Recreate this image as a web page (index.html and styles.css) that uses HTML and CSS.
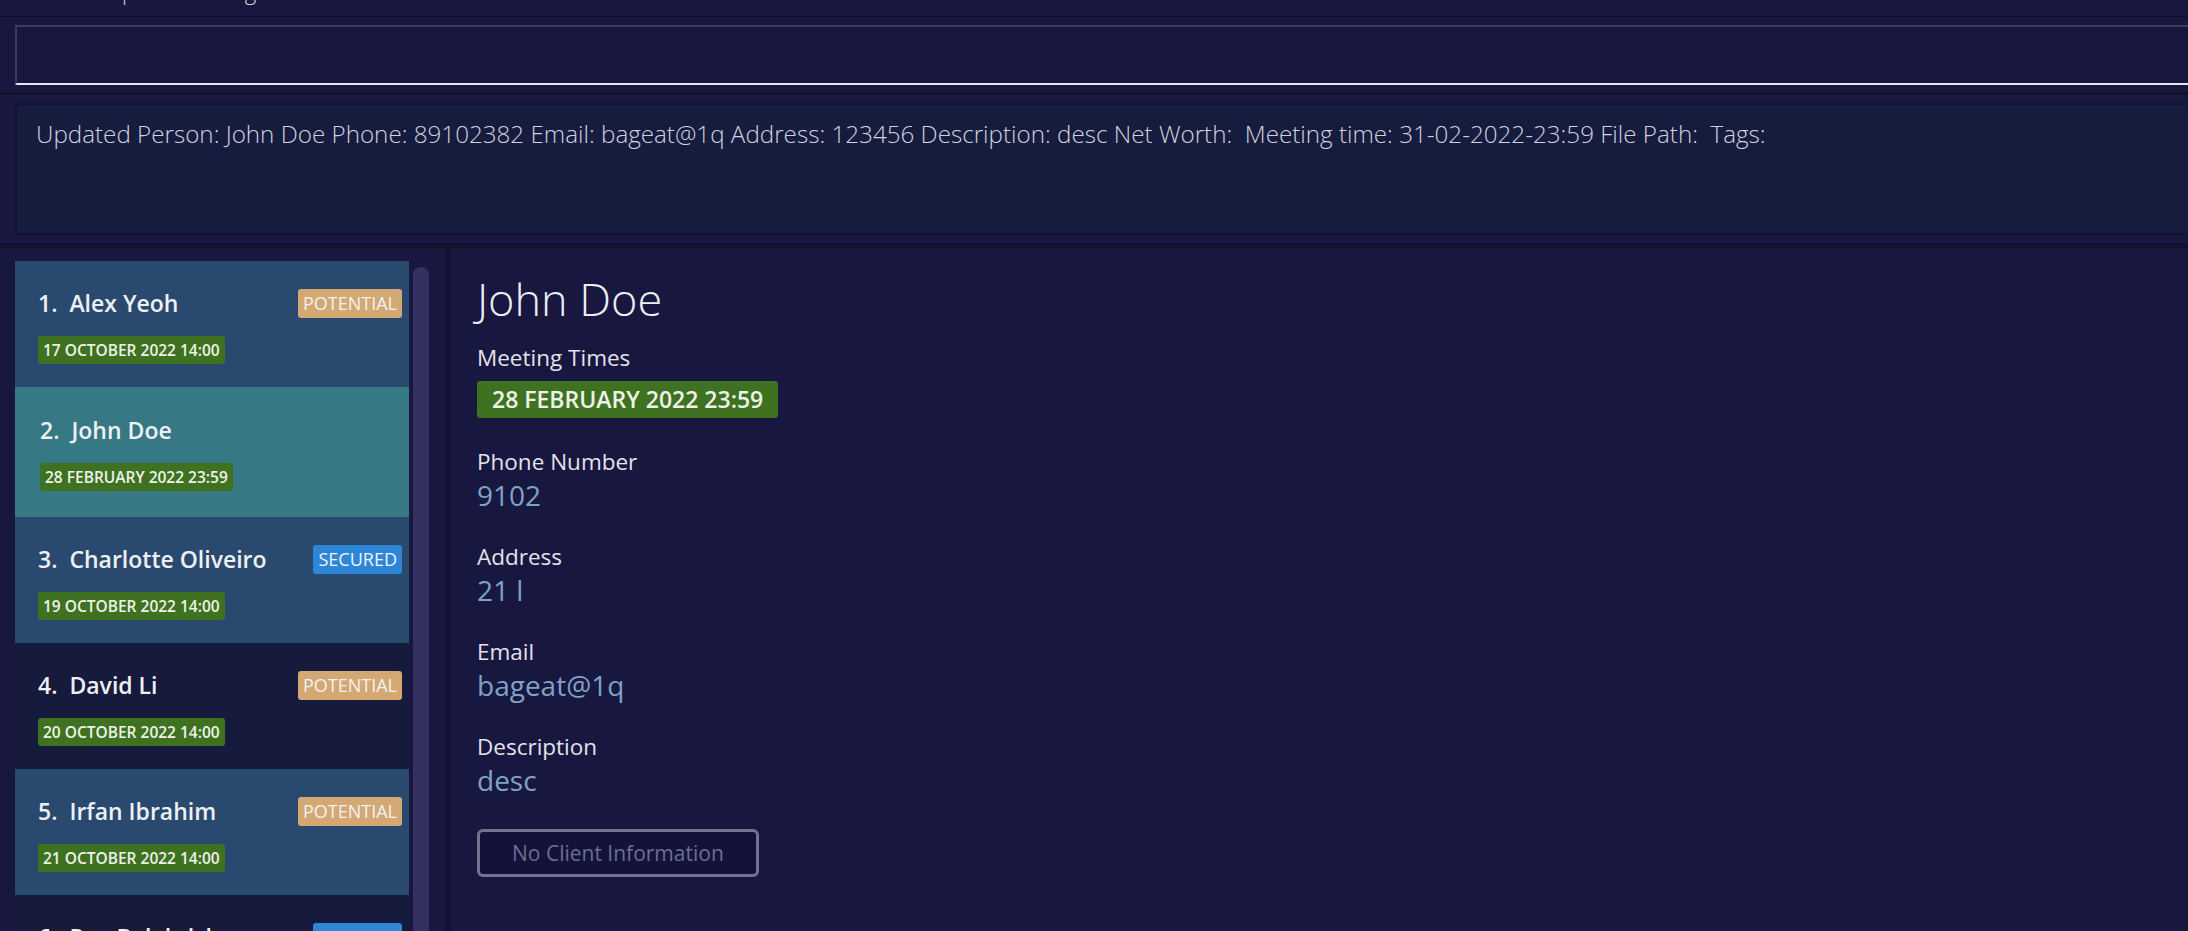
FILE: index.html
```html
<!DOCTYPE html>
<html>
<head>
<meta charset="utf-8">
<title>Client Manager</title>
<link rel="stylesheet" href="styles.css">
</head>
<body>
<div class="app">
  <div class="menubar">
    <span class="menu-item">File</span>
    <span class="menu-item">Help</span>
    <span class="menu-item">Settings</span>
  </div>

  <div class="command-wrap">
    <div class="command-box"></div>
  </div>

  <div class="result-wrap">
    <div class="result-box">Updated Person: John Doe Phone: 89102382 Email: bageat@1q Address: 123456 Description: desc Net Worth:  Meeting time: 31-02-2022-23:59 File Path:  Tags: </div>
  </div>

  <div class="main">
    <div class="list-panel">
      <div class="list">
        <div class="card card-odd">
          <div class="card-top">
            <span class="name">1.  Alex Yeoh</span>
            <span class="tag tag-potential">POTENTIAL</span>
          </div>
          <span class="date">17 OCTOBER 2022 14:00</span>
        </div>
        <div class="card card-selected">
          <div class="card-top">
            <span class="name">2.  John Doe</span>
          </div>
          <span class="date">28 FEBRUARY 2022 23:59</span>
        </div>
        <div class="card card-odd">
          <div class="card-top">
            <span class="name">3.  Charlotte Oliveiro</span>
            <span class="tag tag-secured">SECURED</span>
          </div>
          <span class="date">19 OCTOBER 2022 14:00</span>
        </div>
        <div class="card card-even">
          <div class="card-top">
            <span class="name">4.  David Li</span>
            <span class="tag tag-potential">POTENTIAL</span>
          </div>
          <span class="date">20 OCTOBER 2022 14:00</span>
        </div>
        <div class="card card-odd">
          <div class="card-top">
            <span class="name">5.  Irfan Ibrahim</span>
            <span class="tag tag-potential">POTENTIAL</span>
          </div>
          <span class="date">21 OCTOBER 2022 14:00</span>
        </div>
        <div class="card card-even">
          <div class="card-top">
            <span class="name">6.  Roy Balakrishnan</span>
            <span class="tag tag-secured">SECURED</span>
          </div>
          <span class="date">22 OCTOBER 2022 14:00</span>
        </div>
      </div>
      <div class="scrollbar"></div>
    </div>

    <div class="detail">
      <div class="detail-name">John Doe</div>
      <div class="field field-first">
        <div class="label">Meeting Times</div>
        <span class="meeting">28 FEBRUARY 2022 23:59</span>
      </div>
      <div class="field">
        <div class="label">Phone Number</div>
        <div class="value">9102</div>
      </div>
      <div class="field">
        <div class="label">Address</div>
        <div class="value">21 l</div>
      </div>
      <div class="field">
        <div class="label">Email</div>
        <div class="value">bageat@1q</div>
      </div>
      <div class="field">
        <div class="label">Description</div>
        <div class="value">desc</div>
      </div>
      <button class="client-btn">No Client Information</button>
    </div>
  </div>
</div>
</body>
</html>
```

FILE: styles.css
```css
* {
  box-sizing: border-box;
}

html, body {
  margin: 0;
  padding: 0;
  width: 2188px;
  height: 931px;
  overflow: hidden;
  background: #18173f;
  font-family: "Open Sans", "Noto Sans", sans-serif;
  color: #eceef4;
}

.app {
  display: flex;
  flex-direction: column;
  width: 2188px;
  height: 931px;
}

/* top menu bar, mostly scrolled out of view */
.menubar {
  height: 17px;
  overflow: hidden;
  display: flex;
  gap: 53px;
  padding-left: 3px;
  border-bottom: 1px solid #11102c;
  flex-shrink: 0;
}

.menu-item {
  font-size: 22px;
  font-weight: 300;
  line-height: 30px;
  margin-top: -24px;
  color: #cfd0dc;
}

/* command input */
.command-wrap {
  padding: 8px 0 7px 15px;
  flex-shrink: 0;
}

.command-box {
  height: 60px;
  margin-right: -20px;
  border-top: 2px solid #3d3c50;
  border-left: 2px solid #3d3c50;
  border-bottom: 2px solid #e8e8ee;
  background: #18173f;
}

/* result display */
.result-wrap {
  border-top: 3px solid #12112e;
  padding: 8px 0 8px 15px;
  flex-shrink: 0;
}

.result-box {
  height: 132px;
  margin-right: -20px;
  background: #161c3e;
  border: 2px solid #12132e;
  padding: 13px 0 0 19px;
  font-size: 24.2px;
  font-weight: 300;
  line-height: 32px;
  color: #d0d2de;
  white-space: pre;
}

/* main area */
.main {
  flex: 1;
  display: flex;
  border-top: 5px solid #12112e;
  min-height: 0;
}

.list-panel {
  width: 450px;
  flex-shrink: 0;
  display: flex;
  padding: 13px 17px 0 15px;
  gap: 4px;
  border-right: 4px solid #12112e;
  overflow: hidden;
}

.list {
  width: 394px;
  display: flex;
  flex-direction: column;
}

.scrollbar {
  width: 16px;
  margin-top: 6px;
  border-radius: 8px 8px 0 0;
  background: #34305f;
}

.card {
  height: 126px;
  flex-shrink: 0;
  padding: 27px 7px 0 23px;
  display: flex;
  flex-direction: column;
  align-items: flex-start;
}

.card-odd {
  background: #294a6e;
}

.card-even {
  background: #161a3c;
}

.card-selected {
  background: #367884;
  height: 130px;
  padding-left: 25px;
  padding-top: 28px;
}

.card-top {
  width: 100%;
  height: 30px;
  display: flex;
  align-items: center;
  justify-content: space-between;
}

.name {
  font-size: 23px;
  font-weight: 600;
  line-height: 30px;
  white-space: pre;
  color: #eef0f5;
}

.tag {
  font-size: 18px;
  line-height: 29px;
  height: 29px;
  padding: 0 5px;
  border-radius: 3px;
  color: #f2f2f4;
}

.tag-potential {
  background: #d4a873;
}

.tag-secured {
  background: #2e86d8;
}

.date {
  margin-top: 18px;
  background: #3e7220;
  color: #eef2ea;
  font-size: 15.5px;
  font-weight: 600;
  line-height: 28px;
  height: 28px;
  padding: 0 5px;
  border-radius: 3px;
}

/* detail panel */
.detail {
  flex: 1;
  padding: 24px 0 0 27px;
  display: flex;
  flex-direction: column;
  align-items: flex-start;
}

.detail-name {
  font-size: 45px;
  font-weight: 300;
  line-height: 54px;
  color: #eceef4;
}

.field {
  margin-top: 29px;
  display: flex;
  flex-direction: column;
  align-items: flex-start;
}

.field-first {
  margin-top: 17px;
}

.label {
  font-size: 22.5px;
  line-height: 30px;
  color: #e2e2ea;
}

.meeting {
  margin-top: 8px;
  height: 37px;
  line-height: 37px;
  padding: 0 15px;
  background: #3e7220;
  border-radius: 3px;
  font-size: 23px;
  font-weight: 600;
  color: #eef2ea;
}

.value {
  font-size: 28px;
  line-height: 36px;
  color: #7fa2c6;
}

.client-btn {
  margin-top: 31px;
  height: 48px;
  padding: 0 32px;
  border: 3px solid #74738f;
  border-radius: 6px;
  background: #13123a;
  color: #6e6d90;
  font-family: "Open Sans", "Noto Sans", sans-serif;
  font-size: 21px;
  line-height: 42px;
}
```
